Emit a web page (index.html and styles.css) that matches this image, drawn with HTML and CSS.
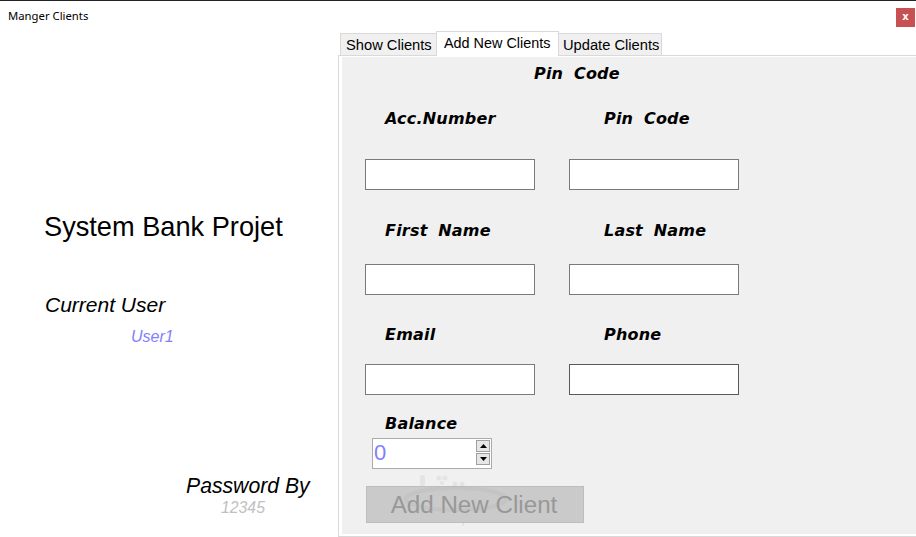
FILE: index.html
```html
<!DOCTYPE html>
<html lang="en">
<head>
  <meta charset="UTF-8" />
  <title>Manger Clients</title>
  <link rel="stylesheet" href="styles.css">
</head>
<body>
  <header class="titlebar">
    <span class="title">Manger Clients</span>
    <button class="close">x</button>
  </header>

  <main class="window">
    <aside class="side">
      <h1>System Bank Projet</h1>
      <p class="current">Current User</p>
      <p class="user">User1</p>
      <p class="pass">Password By</p>
      <p class="pass-value">12345</p>
    </aside>

    <section class="tabs">
      <nav class="tab-row">
        <a class="tab">Show Clients</a>
        <a class="tab active">Add New Clients</a>
        <a class="tab">Update Clients</a>
      </nav>
      <div class="page">
        <form class="panel">
          <h2>Pin Code</h2>
          <div class="row row-1">
            <div class="field"><label>Acc.Number</label><input type="text"></div>
            <div class="field"><label>Pin Code</label><input type="text"></div>
          </div>
          <div class="row row-2">
            <div class="field"><label>First Name</label><input type="text"></div>
            <div class="field"><label>Last Name</label><input type="text"></div>
          </div>
          <div class="row row-3">
            <div class="field"><label>Email</label><input type="text"></div>
            <div class="field"><label>Phone</label><input type="text" class="focus"></div>
          </div>
          <label class="balance-label">Balance</label>
          <div class="spinner">
            <span class="value">0</span>
            <span class="arrows">
              <span class="arrow"><svg width="7" height="4" viewBox="0 0 7 4"><path d="M3.5 0L7 4H0z"/></svg></span>
              <span class="arrow"><svg width="7" height="4" viewBox="0 0 7 4"><path d="M0 0h7L3.500 4z"/></svg></span>
            </span>
          </div>
          <div class="submit-wrap">
            <button type="button" class="submit">Add New Client</button>
            <svg class="watermark" width="150" height="52" viewBox="0 0 150 52">
              <rect x="54" y="0" width="5" height="11" rx="2"/>
              <circle cx="73" cy="3" r="2.500"/>
              <circle cx="79" cy="3" r="2.500"/>
              <circle cx="76" cy="8" r="2"/>
              <circle cx="89" cy="9" r="2.500"/>
              <circle cx="96" cy="9" r="2.500"/>
              <ellipse cx="90" cy="24" rx="50" ry="11" fill="none" stroke-width="4" stroke="#a8a8a8"/>
              <rect x="96" y="47" width="2" height="4"/>
            </svg>
          </div>
        </form>
      </div>
    </section>
  </main>
</body>
</html>
```

FILE: styles.css
```css
html, body {
  height: 100%;
}
body {
  margin: 0;
  width: 916px;
  height: 537px;
  overflow: hidden;
  display: flex;
  flex-direction: column;
  background-color: #ffffff;
  color: #000000;
  font-family: "Liberation Sans", Arial, sans-serif;
  box-sizing: border-box;
  border-top: 1px solid #222222;
}

/* title bar */
.titlebar {
  height: 30px;
  flex: none;
  display: flex;
  justify-content: space-between;
  align-items: flex-start;
  padding: 0 1px 0 8px;
}
.title {
  font-family: "Noto Sans", "Open Sans", sans-serif;
  font-size: 11.300px;
  line-height: 14px;
  margin-top: 8px;
}
.close {
  width: 19px;
  height: 19px;
  margin-top: 7px;
  padding: 0 0 2px;
  border: none;
  background-color: #c75050;
  color: white;
  font-family: "DejaVu Sans", sans-serif;
  font-size: 10px;
  font-weight: bold;
  line-height: 1;
}

.window {
  flex: 1;
  display: flex;
  min-height: 0;
}

/* left column */
.side {
  width: 338px;
  flex: none;
  padding-top: 178px;
  box-sizing: border-box;
}
.side h1 {
  margin: 0 0 0 44px;
  font-size: 27.200px;
  font-weight: normal;
  line-height: 35px;
}
.side p {
  margin: 0;
  font-style: italic;
}
.side .current {
  margin: 48px 0 0 45px;
  font-size: 21px;
  line-height: 26px;
}
.side .user {
  margin: 9px 0 0 131px;
  font-size: 16px;
  line-height: 20px;
  color: #8080ff;
}
.side .pass {
  margin: 126px 0 0 186px;
  font-size: 21.200px;
  line-height: 26px;
}
.side .pass-value {
  margin: 0 0 0 221px;
  font-size: 15.800px;
  line-height: 18px;
  color: #c0c0c0;
}

/* tabs */
.tabs {
  flex: 1;
  display: flex;
  flex-direction: column;
  min-width: 0;
}
.tab-row {
  height: 24px;
  flex: none;
  display: flex;
  align-items: flex-end;
  padding-left: 2px;
  position: relative;
  z-index: 1;
}
.tab {
  height: 22px;
  box-sizing: border-box;
  padding: 2px 0 0 5px;
  background-color: #f0f0f0;
  border: 1px solid #d9d9d9;
  border-bottom: none;
  font-size: 14.700px;
  line-height: 18px;
  white-space: nowrap;
}
.tab:nth-child(1) { width: 96px; border-right: none; }
.tab:nth-child(3) { width: 103px; border-left: none; padding-left: 4px; }
.tab.active {
  width: 123px;
  height: 25px;
  margin-bottom: -1px;
  padding: 2px 0 0 7px;
  background-color: #ffffff;
  font-size: 14.400px;
}
.page {
  flex: 1;
  min-height: 0;
  display: flex;
  border: 1px solid #d9d9d9;
  border-right: none;
  padding: 1px 0 2px 3px;
  background-color: #ffffff;
}
.panel {
  flex: 1;
  background-color: #f0f0f0;
  padding-left: 23px;
}

/* form */
.panel h2, .panel label {
  display: block;
  margin: 0;
  font-family: "DejaVu Sans", sans-serif;
  font-size: 16px;
  font-weight: bold;
  font-style: italic;
  line-height: 20px;
  letter-spacing: 0.2px;
  word-spacing: 5px;
}
.panel h2 {
  padding: 7px 0 0 169px;
}
.row {
  display: flex;
  gap: 34px;
}
.row-1 { margin-top: 25px; }
.row-2 { margin-top: 31px; }
.row-3 { margin-top: 30px; }
.field {
  width: 170px;
}
.field label {
  padding-left: 20px;
}
.row-1 label { margin-bottom: 30px; }
.row-2 label { margin-bottom: 23px; }
.row-3 label { margin-bottom: 19px; }
.field:nth-child(2) label { padding-left: 35px; }
.field input {
  display: block;
  width: 170px;
  height: 31px;
  box-sizing: border-box;
  border: 1px solid #7a7a7a;
  background-color: #ffffff;
  padding: 0;
}
.field input.focus {
  border-color: #5a5a5a;
}
.panel .balance-label {
  margin: 19px 0 0 20px;
}
.spinner {
  width: 120px;
  height: 31px;
  margin: 4px 0 0 7px;
  box-sizing: border-box;
  border: 1px solid #ababab;
  background-color: #ffffff;
  display: flex;
  justify-content: space-between;
}
.value {
  padding-left: 1px;
  font-size: 22px;
  line-height: 28px;
  color: #8080ff;
}
.arrows {
  width: 14px;
  margin: 1px 1px 0 0;
  display: flex;
  flex-direction: column;
  gap: 1px;
}
.arrow {
  height: 12px;
  display: flex;
  justify-content: center;
  align-items: center;
  box-sizing: border-box;
  background-color: #e6e6e6;
  border: 1px solid #a0a0a0;
}
.submit-wrap {
  position: relative;
  width: 218px;
  margin: 17px 0 0 1px;
}
.submit {
  display: block;
  width: 218px;
  height: 37px;
  padding: 0 2px 0 0;
  box-sizing: border-box;
  border: 1px solid #bdbdbd;
  background-color: #cacaca;
  color: #989898;
  font-family: "Liberation Sans", Arial, sans-serif;
  font-size: 24.200px;
}
.watermark {
  position: absolute;
  left: 0;
  top: -11px;
  fill: #a8a8a8;
  opacity: 0.16;
  pointer-events: none;
}
```
